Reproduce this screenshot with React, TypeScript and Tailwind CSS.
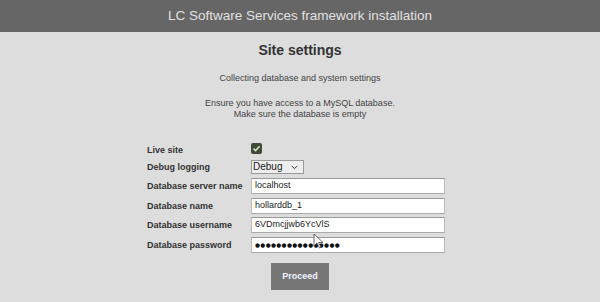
import React from "react";

const rows: { label: string; value: string; mt: string; pw?: boolean }[] = [
  { label: "Database server name", value: "localhost", mt: "mt-[4px]" },
  { label: "Database name", value: "hollarddb_1", mt: "mt-[4px]" },
  { label: "Database username", value: "6VDmcjjwb6YcVlS", mt: "mt-[3px]" },
  { label: "Database password", value: "●●●●●●●●●●●●●●●●", mt: "mt-[4px]", pw: true },
];

export default function App() {
  return (
    <div
      className="w-[600px] h-[302px] bg-[#dddddd] overflow-hidden relative"
      style={{ fontFamily: '"Liberation Sans", Arial, sans-serif' }}
    >
      <div className="h-[32px] bg-[#666666] flex items-center justify-center text-[#e0e0e0] text-[13.5px]">
        LC Software Services framework installation
      </div>
      <div className="flex flex-col items-center">
        <h1 className="mt-[10px] text-[14px] leading-[16px] font-bold text-[#333333]">Site settings</h1>
        <p className="mt-[15px] text-[9px] leading-[11px] text-[#444444]">
          Collecting database and system settings
        </p>
        <p className="mt-[14px] text-[9px] leading-[11px] text-[#444444] text-center">
          Ensure you have access to a MySQL database.
          <br />
          Make sure the database is empty
        </p>
      </div>
      <div className="ml-[147px] mt-[23px] flex flex-col text-[9px] font-bold text-[#333333]">
        <div className="flex items-center h-[11px]">
          <div className="w-[104px] leading-[11px] pt-[4px]">Live site</div>
          <div className="w-[11px] h-[11px] rounded-[2px] bg-[#3f4a38] flex items-center justify-center">
            <svg width="9" height="9" viewBox="0 0 9 9">
              <path d="M1.5 4.6 L3.6 6.6 L7.6 2.2" stroke="#cfe8c0" strokeWidth="1.5" fill="none" />
            </svg>
          </div>
        </div>
        <div className="flex items-center h-[14px] mt-[6px]">
          <div className="w-[104px] leading-[14px]">Debug logging</div>
          <div className="w-[53px] h-[14px] border border-[#9a9a9a] bg-[#eeeeee] flex items-center justify-between pl-[1px] pr-[5px] font-normal text-[10px] text-[#222] leading-[12px]">
            <span>Debug</span>
            <svg width="7" height="5" viewBox="0 0 7 5">
              <path d="M0.8 1 L3.5 3.6 L6.2 1" stroke="#333" strokeWidth="1" fill="none" />
            </svg>
          </div>
        </div>
        {rows.map((r) => (
          <div key={r.label} className={`flex items-center h-[16px] ${r.mt}`}>
            <div className="w-[104px] leading-[16px] whitespace-nowrap">{r.label}</div>
            <div
              className={
                r.pw
                  ? "w-[194px] h-[16px] bg-white border border-[#bbbbbb] border-t-[#999999] border-b-[#aaaaaa] flex items-center pl-[3px] font-normal text-[5.7px] tracking-[0.35px] text-[#111]"
                  : "w-[194px] h-[16px] bg-white border border-[#bbbbbb] border-t-[#999999] border-b-[#aaaaaa] flex items-center pl-[3px] font-normal text-[9px] text-[#222]"
              }
              style={r.pw ? { fontFamily: '"DejaVu Sans", sans-serif' } : undefined}
            >
              {r.value}
            </div>
          </div>
        ))}
      </div>
      <div className="flex justify-center">
        <button className="mt-[10px] w-[58px] h-[27px] bg-[#777777] text-[#eef3ff] text-[9px] font-bold">
          Proceed
        </button>
      </div>
      <svg className="absolute left-[313px] top-[233px]" width="12" height="16" viewBox="0 0 12 16">
        <path d="M1 1 L1 13 L4 10 L6.5 15 L8 14.3 L5.6 9.5 L10 9.5 Z" fill="#ffffff" stroke="#444" strokeWidth="0.8" />
      </svg>
    </div>
  );
}
